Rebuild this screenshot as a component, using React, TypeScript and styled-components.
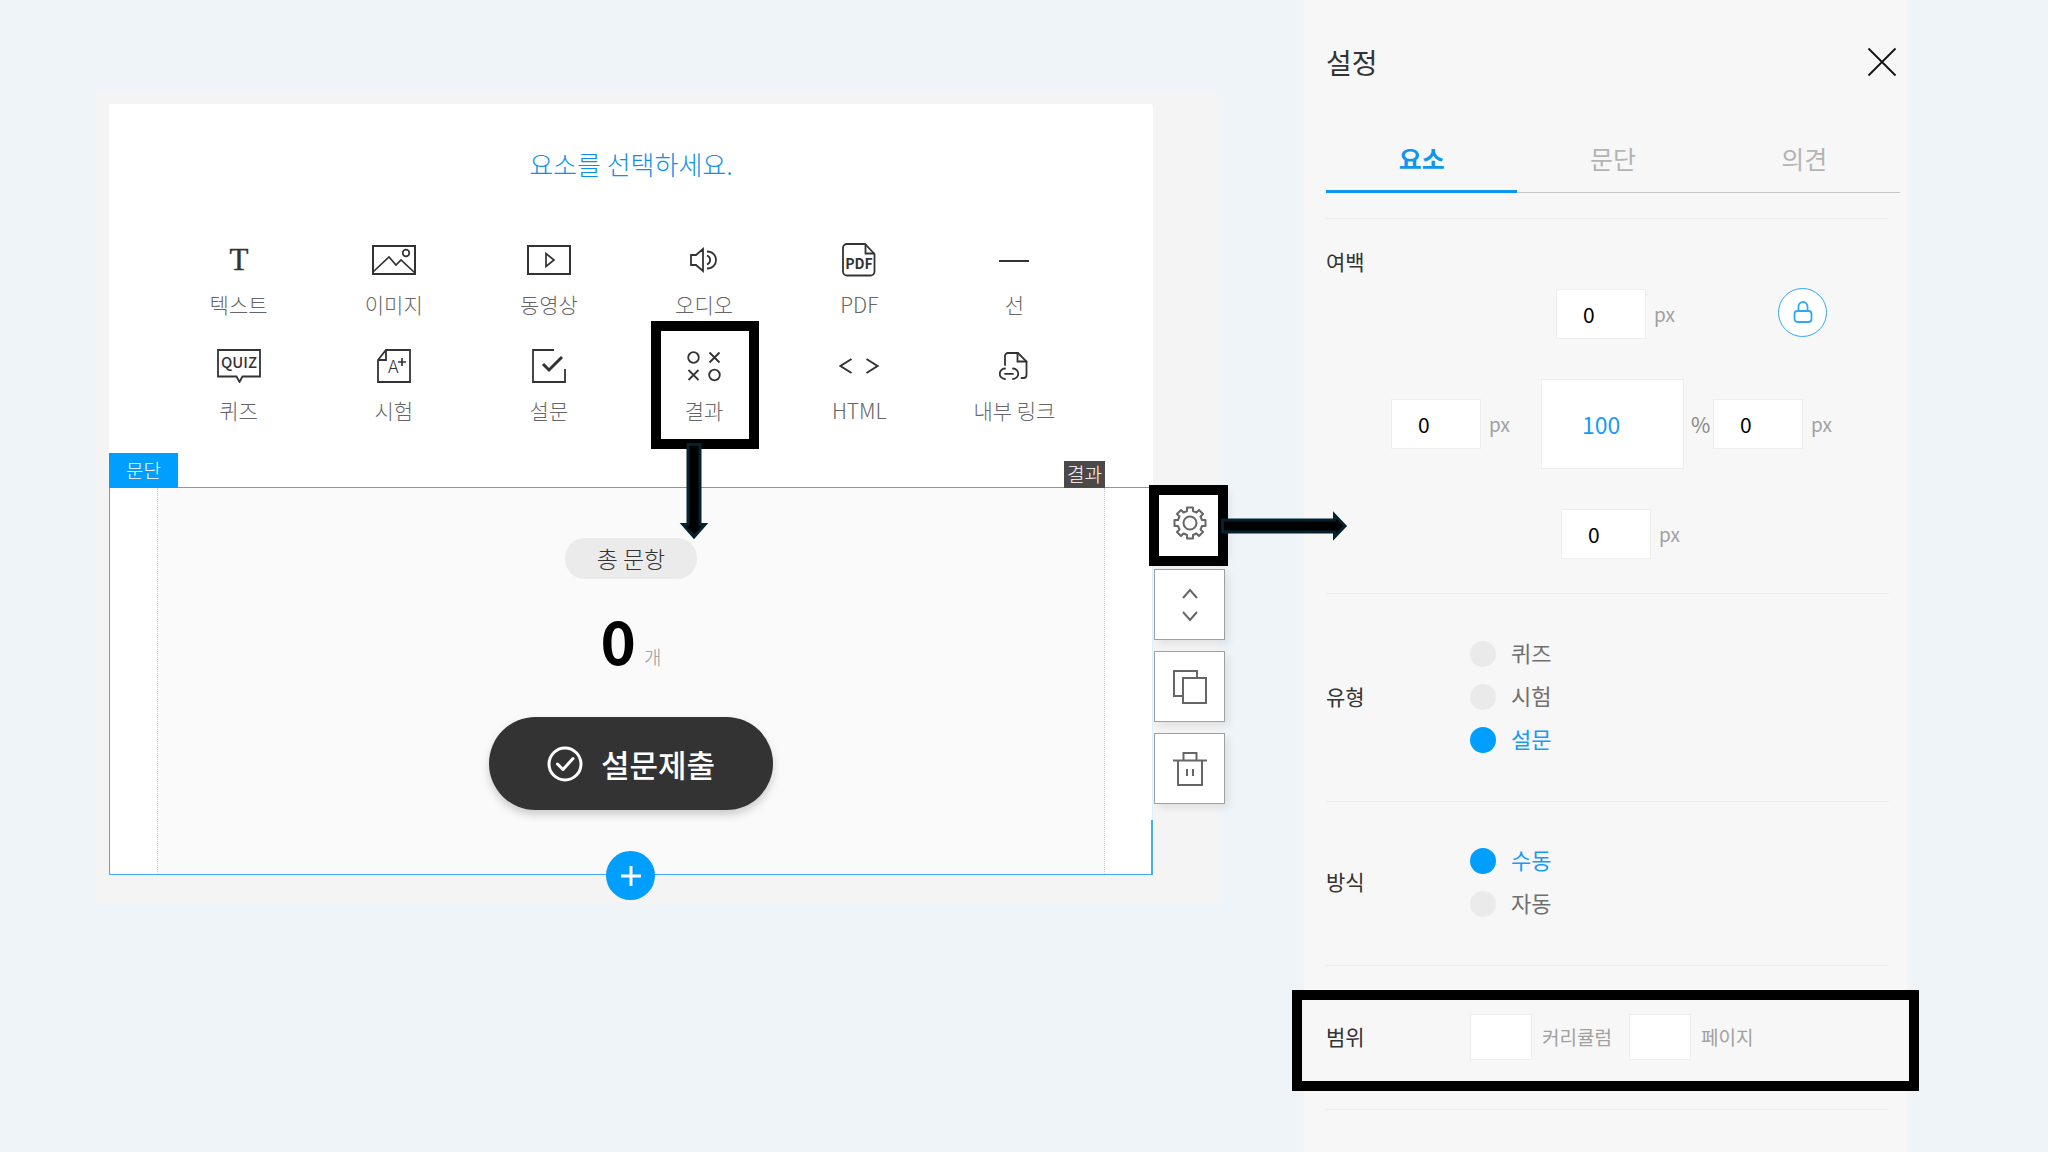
import React, { useState } from 'react';
import styled, { createGlobalStyle, css } from 'styled-components';

const blue = '#009eff';
const ink = '#333';

const GlobalStyle = createGlobalStyle`
  *, *::before, *::after { box-sizing: border-box; }
  body {
    margin: 0;
    background: #eff4f8;
    color: ${ink};
    font-family: "Noto Sans CJK KR", "Noto Sans", sans-serif;
    font-size: 21px;
    line-height: 30px;
  }
  button, input { font: inherit; color: inherit; margin: 0; }
  button { padding: 0; border: 0; background: none; cursor: pointer; }
  h1, h2, p, fieldset { margin: 0; padding: 0; border: 0; font-weight: 400; }
  svg { display: block; flex-shrink: 0; }
`;

const Page = styled.div`
  display: flex;
  align-items: flex-start;
  gap: 87px;
  min-height: 100vh;
  padding: 0 141px 0 96px;
`;

/* ---------- Editor ---------- */

const Workspace = styled.main`
  flex: 1;
  min-width: 0;
  display: grid;
  grid-template-columns: minmax(0, 1fr) 64px;
  margin-top: 92px;
  padding: 12px 0 28px 13px;
  background: #f4f4f4;
  box-shadow: 0 0 6px #f4f4f4;
`;

const Picker = styled.section`
  grid-column: 1;
  padding: 43px 61px 62px 52px;
  background: #fff;
  border-top-right-radius: 3px;
`;

const PickerTitle = styled.h1`
  padding-left: 9px;
  margin-bottom: 59px;
  font-size: 26px;
  font-weight: 300;
  line-height: 34px;
  text-align: center;
  color: #0c90ee;
`;

const ToolGrid = styled.div`
  display: grid;
  grid-template-columns: repeat(6, 1fr);
  row-gap: 27px;
`;

const ToolCell = styled.div`
  position: relative;
  display: flex;
  justify-content: center;
`;

const Tool = styled.button`
  display: flex;
  flex-direction: column;
  align-items: center;
  gap: 9px;
  font-weight: 300;
  color: #666;
`;

const ToolIcon = styled.span`
  display: flex;
  align-items: center;
  height: 40px;
`;

const Block = styled.section`
  grid-column: 1;
  position: relative;
  padding: 0 47px;
  border: 1px solid #43abee;
  border-right-color: #dcf0fb;
  background: #fff;

  &::after {
    content: '';
    position: absolute;
    right: -1px;
    bottom: -1px;
    width: 2px;
    height: 55px;
    background: #43abee;
  }
`;

const BlockTab = styled.span`
  position: absolute;
  left: -1px;
  bottom: 100%;
  padding: 0 17px 2px;
  background: ${blue};
  color: #fff;
  font-size: 19px;
  font-weight: 300;
  line-height: 33px;
`;

const BlockBadge = styled.span`
  position: absolute;
  right: 47px;
  bottom: 100%;
  padding: 0 3px 1px;
  background: #4d4948;
  color: #fff;
  font-size: 19px;
  font-weight: 300;
  line-height: 26px;
`;

const Result = styled.div`
  display: flex;
  flex-direction: column;
  align-items: center;
  padding: 50px 0 64px;
  border: 1px dotted #ccc;
  border-width: 0 1px;
  background: #fafafa;
`;

const Pill = styled.p`
  padding: 0 32px;
  border-radius: 20px;
  background: #ebebeb;
  font-size: 23px;
  font-weight: 300;
  line-height: 41px;
`;

const Count = styled.p`
  display: flex;
  align-items: baseline;
  gap: 8px;
  height: 60px;
  margin: 30px 0 48px;
  line-height: 60px;
`;

const CountValue = styled.strong`
  font-size: 60px;
  font-weight: 700;
  color: #000;
`;

const CountUnit = styled.span`
  font-size: 19px;
  font-weight: 300;
  color: #999;
`;

const Submit = styled.button`
  display: flex;
  align-items: center;
  gap: 18px;
  height: 93px;
  padding: 0 58px;
  border-radius: 47px;
  background: #333;
  box-shadow: 0 5px 8px rgba(0, 0, 0, 0.18);
  color: #fff;
  font-size: 31px;
  font-weight: 500;
  white-space: nowrap;
`;

const AddButton = styled.button`
  position: absolute;
  left: 50%;
  bottom: -26px;
  z-index: 1;
  display: flex;
  align-items: center;
  justify-content: center;
  width: 49px;
  height: 49px;
  margin-left: -25px;
  border-radius: 50%;
  background: ${blue};
  color: #fff;
`;

const Rail = styled.div`
  grid-column: 2;
  display: flex;
  flex-direction: column;
  gap: 11px;
  width: 71px;
  margin-left: 1px;
`;

const RailItem = styled.div`
  position: relative;
`;

const RailButton = styled.button`
  display: flex;
  align-items: center;
  justify-content: center;
  width: 71px;
  height: 71px;
  border: 1px solid #a0a0a0;
  background: #fff;
  box-shadow: 4px 4px 8px rgba(0, 0, 0, 0.08);
  color: #666;
`;

/* ---------- Guide marks ---------- */

const Frame = styled.span<{ $inset: string }>`
  position: absolute;
  inset: ${(p) => p.$inset};
  z-index: 2;
  border: 10px solid #000;
  pointer-events: none;
`;

const ArrowDown = styled.svg`
  position: absolute;
  top: 97px;
  left: 50%;
  z-index: 3;
  margin-left: -25px;
`;

const ArrowRight = styled.svg`
  position: absolute;
  top: 24px;
  left: 67px;
  z-index: 3;
`;

/* ---------- Settings ---------- */

const Settings = styled.aside`
  flex: 0 0 603px;
  min-height: 100vh;
  padding: 40px 7px 0 22px;
  background: #f7f7f7;
  box-shadow: 0 0 4px #f7f7f7;
`;

const SettingsHeader = styled.header`
  display: flex;
  align-items: center;
  justify-content: space-between;
  height: 44px;
  padding-right: 3px;
`;

const SettingsTitle = styled.h2`
  font-size: 28px;
  line-height: 44px;
`;

const Tabs = styled.div`
  display: grid;
  grid-template-columns: repeat(3, 1fr);
  margin: 44px 0 25px;
`;

const Tab = styled.button<{ $active: boolean }>`
  height: 65px;
  padding-bottom: 4px;
  border-bottom: 1px solid #c6c6c6;
  font-size: 25px;
  color: #b4b4b4;
  ${(p) =>
    p.$active &&
    css`
      padding-bottom: 2px;
      border-bottom: 3px solid #0f97ee;
      color: #0f97ee;
      font-weight: 700;
    `}
`;

const Group = styled.section<{ $pad: string }>`
  position: relative;
  margin-right: 11px;
  padding: ${(p) => p.$pad};
  border-top: 1px solid #ececec;
`;

const Row = styled.fieldset`
  display: grid;
  grid-template-columns: 144px 1fr;
  align-items: center;
`;

const RowLabel = styled.span`
  padding-bottom: 2px;
`;

const MarginGrid = styled.div`
  display: grid;
  grid-template-columns: 150px 172px 1fr;
  grid-template-rows: 50px 90px 50px;
  row-gap: 40px;
  align-items: center;
  margin: 13px 0 0 65px;
`;

const Field = styled.label<{ $col?: number; $indent?: number; $gap?: number }>`
  display: flex;
  align-items: center;
  gap: ${(p) => p.$gap ?? 8}px;
  ${(p) => p.$col && `grid-column: ${p.$col};`}
  margin-left: ${(p) => p.$indent ?? 0}px;
`;

const NumberBox = styled.input<{ $size?: 'large' | 'small' }>`
  width: 90px;
  height: 50px;
  padding: 0 0 0 26px;
  border: 1px solid #eee;
  border-radius: 0;
  outline: 0;
  background: #fff;
  color: #000;
  ${(p) =>
    p.$size === 'large' &&
    css`
      width: 143px;
      height: 90px;
      padding-left: 40px;
      color: #159cf3;
      font-size: 23px;
    `}
  ${(p) =>
    p.$size === 'small' &&
    css`
      width: 62px;
      height: 46px;
      padding: 0 8px;
    `}
`;

const Unit = styled.span<{ $large?: boolean }>`
  font-size: ${(p) => (p.$large ? 21 : 19)}px;
  color: ${(p) => (p.$large ? '#888' : '#a0a0a0')};
`;

const LockButton = styled.button`
  display: flex;
  align-items: center;
  justify-content: center;
  justify-self: start;
  width: 49px;
  height: 49px;
  margin: 0 0 4px 65px;
  border: 1px solid #2fa8f3;
  border-radius: 50%;
  background: #fff;
  color: #2fa8f3;
`;

const Choice = styled.label<{ $on: boolean }>`
  display: flex;
  align-items: center;
  gap: 15px;
  height: 43px;
  font-size: 22px;
  color: ${(p) => (p.$on ? '#159cf3' : '#707070')};
`;

const ChoiceText = styled.span`
  padding-bottom: 4px;
`;

const Radio = styled.input`
  appearance: none;
  width: 26px;
  height: 26px;
  border-radius: 50%;
  background: #eaeaea;
  &:checked { background: ${blue}; }
`;

const RangeFields = styled.div`
  display: flex;
  gap: 17px;
`;

/* ---------- Icons ---------- */

const glyph = {
  fill: 'none',
  stroke: ink,
  strokeWidth: 2,
} as const;

const icons: Record<string, React.ReactNode> = {
  텍스트: (
    <svg width="30" height="34" viewBox="0 0 30 34">
      <text x="15" y="27" textAnchor="middle" fontFamily="Liberation Serif, serif" fontSize="31" fill={ink} stroke={ink} strokeWidth="0.4">T</text>
    </svg>
  ),
  이미지: (
    <svg width="44" height="30" viewBox="0 0 44 30" {...glyph}>
      <rect x="1" y="1" width="42" height="28" />
      <path d="M1 27 L17 12 L24 20 L29 15 L43 28" strokeWidth="1.7" />
      <circle cx="34" cy="8" r="3.3" strokeWidth="1.7" />
    </svg>
  ),
  동영상: (
    <svg width="44" height="30" viewBox="0 0 44 30" {...glyph}>
      <rect x="1" y="1" width="42" height="28" />
      <path d="M19 8.5 V21.5 L27 15 Z" strokeWidth="1.7" />
    </svg>
  ),
  오디오: (
    <svg width="30" height="28" viewBox="0 0 30 28" {...glyph} strokeWidth={1.8}>
      <path d="M2 9 V19 H7 L14 25 V3 L7 9 Z" />
      <path d="M18 9.5 A4.8 4.8 0 0 1 18 18.5" />
      <path d="M18 5.5 C30 5.5 30 22.5 18 22.5" />
    </svg>
  ),
  PDF: (
    <svg width="34" height="34" viewBox="0 0 34 34" {...glyph}>
      <path d="M5 1 H23 L32.5 11 V28.5 A4 4 0 0 1 28.5 32.5 H5 A4 4 0 0 1 1 28.5 V5 A4 4 0 0 1 5 1 Z" strokeWidth="1.8" />
      <path d="M23.5 1 V10.5 H32.5" strokeWidth="1.8" />
      <text x="17" y="26" textAnchor="middle" fontSize="14" fontWeight="700" fill={ink} stroke="none">PDF</text>
    </svg>
  ),
  선: (
    <svg width="30" height="34" viewBox="0 0 30 34" {...glyph}>
      <path d="M0 18 H30" />
    </svg>
  ),
  퀴즈: (
    <svg width="44" height="34" viewBox="0 0 44 34" {...glyph}>
      <path d="M1 1 H43 V27.5 H25.5 L22.5 33 L19.5 27.5 H1 Z" strokeWidth="1.8" />
      <text x="22" y="19" textAnchor="middle" fontSize="15" fontWeight="500" fill={ink} stroke="none">QUIZ</text>
    </svg>
  ),
  시험: (
    <svg width="34" height="34" viewBox="0 0 34 34" {...glyph}>
      <path d="M9 1 H33 V33 H1 V11 Z M9 1 V11 H1" strokeWidth="1.8" />
      <text x="11" y="24" fontSize="18" fill={ink} stroke="none">A</text>
      <path d="M21 13 H29 M25 9 V17" strokeWidth="1.7" />
    </svg>
  ),
  설문: (
    <svg width="34" height="34" viewBox="0 0 34 34" {...glyph}>
      <path d="M22 1 H1 V33 H33 V20" strokeWidth="1.8" />
      <path d="M11 15 L17 21 L30 8" strokeWidth="3" />
    </svg>
  ),
  결과: (
    <svg width="34" height="34" viewBox="0 0 34 34" {...glyph}>
      <circle cx="6.5" cy="8.5" r="5.3" strokeWidth="1.8" />
      <circle cx="27.5" cy="26" r="5.3" strokeWidth="1.8" />
      <path d="M22.5 3.5 L32.5 13.5 M32.5 3.5 L22.5 13.5 M1.5 21 L11.5 31 M11.5 21 L1.5 31" strokeWidth="1.8" />
    </svg>
  ),
  HTML: (
    <svg width="40" height="20" viewBox="0 0 40 20" {...glyph}>
      <path d="M12.5 3 L1.5 10 L12.5 17 M27.5 3 L38.5 10 L27.5 17" />
    </svg>
  ),
  '내부 링크': (
    <svg width="30" height="30" viewBox="0 0 30 30" {...glyph} strokeWidth={1.8} strokeLinecap="round">
      <path d="M6 14 V5 A3 3 0 0 1 9 2 H19 L27.5 10.5 V24 A3 3 0 0 1 24.5 27 H22.5" />
      <path d="M18.5 2 V10.5 H27.5" />
      <path d="M6 17.5 A5 5 0 0 0 6 28 M14 17.5 A5 5 0 0 1 14 28 M6 22.8 H14" />
    </svg>
  ),
};

const GearIcon = () => (
  <svg width="36" height="36" viewBox="0 0 36 36" fill="none" stroke="currentColor" strokeWidth="2" strokeLinejoin="round">
    <path d="M15 2.5 H21 V6 L24.5 7.5 L27 5 L31 9 L28.5 11.5 L30 15 H33.5 V21 H30 L28.5 24.5 L31 27 L27 31 L24.5 28.5 L21 30 V33.5 H15 V30 L11.5 28.5 L9 31 L5 27 L7.5 24.5 L6 21 H2.5 V15 H6 L7.5 11.5 L5 9 L9 5 L11.5 7.5 L15 6 Z" />
    <circle cx="18" cy="18" r="6.5" />
  </svg>
);

const MoveIcon = () => (
  <svg width="18" height="36" viewBox="0 0 18 36" fill="none" stroke="currentColor" strokeWidth="2">
    <path d="M2 11 L9 3 L16 11 M2 25 L9 33 L16 25" />
  </svg>
);

const CopyIcon = () => (
  <svg width="34" height="34" viewBox="0 0 34 34" fill="none" stroke="currentColor" strokeWidth="2">
    <path d="M10 26 H1 V1 H24 V8" />
    <rect x="10" y="8" width="23" height="25" />
  </svg>
);

const TrashIcon = () => (
  <svg width="34" height="34" viewBox="0 0 34 34" fill="none" stroke="currentColor" strokeWidth="2">
    <path d="M0 8.5 H34 M5 8.5 V33 H29 V8.5 M10.5 8.5 V1 H23.5 V8.5 M14 17 V24 M20 17 V24" />
  </svg>
);

const CheckCircle = () => (
  <svg width="36" height="36" viewBox="0 0 36 36" fill="none" stroke="#fff" strokeWidth="3">
    <circle cx="18" cy="18" r="16" />
    <path d="M10.5 18 L16 23.5 L26 12.5" strokeLinecap="round" strokeLinejoin="round" />
  </svg>
);

const PlusIcon = () => (
  <svg width="20" height="20" viewBox="0 0 20 20" fill="none" stroke="currentColor" strokeWidth="3">
    <path d="M0 10 H20 M10 0 V20" />
  </svg>
);

const LockIcon = () => (
  <svg width="20" height="22" viewBox="0 0 20 22" fill="none" stroke="currentColor" strokeWidth="1.8">
    <rect x="1.5" y="10" width="17" height="11" rx="3" />
    <path d="M5.5 10 V5.5 A4.5 4.5 0 0 1 14.5 5.5 V10" />
  </svg>
);

const CloseIcon = () => (
  <svg width="30" height="30" viewBox="0 0 30 30" fill="none" stroke="#111" strokeWidth="1.8">
    <path d="M1.5 1.5 L28.5 28.5 M28.5 1.5 L1.5 28.5" />
  </svg>
);

/* ---------- Page ---------- */

const tools = ['텍스트', '이미지', '동영상', '오디오', 'PDF', '선', '퀴즈', '시험', '설문', '결과', 'HTML', '내부 링크'];
const tabs = ['요소', '문단', '의견'];

function Choices({ title, name, options, initial }: { title: string; name: string; options: string[]; initial: string }) {
  const [value, setValue] = useState(initial);
  return (
    <Row role="radiogroup" aria-label={title}>
      <RowLabel>{title}</RowLabel>
      <div>
        {options.map((option) => (
          <Choice key={option} $on={option === value}>
            <Radio type="radio" name={name} checked={option === value} onChange={() => setValue(option)} />
            <ChoiceText>{option}</ChoiceText>
          </Choice>
        ))}
      </div>
    </Row>
  );
}

export default function App() {
  const [tab, setTab] = useState('요소');

  return (
    <>
      <GlobalStyle />
      <Page>
        <Workspace>
          <Picker>
            <PickerTitle>요소를 선택하세요.</PickerTitle>
            <ToolGrid>
              {tools.map((name) => (
                <ToolCell key={name}>
                  <Tool type="button">
                    <ToolIcon>{icons[name]}</ToolIcon>
                    {name}
                  </Tool>
                  {name === '결과' && (
                    <>
                      <Frame $inset="-25px 23px -24px 24px" />
                      <ArrowDown width="30" height="97" viewBox="0 0 30 97" fill="#000" stroke="#04222f" strokeWidth="3">
                        <path d="M9 1.5 H21 V81.5 H26 L15 94 L4 81.5 H9 Z" />
                      </ArrowDown>
                    </>
                  )}
                </ToolCell>
              ))}
            </ToolGrid>
          </Picker>

          <Block>
            <BlockTab>문단</BlockTab>
            <BlockBadge>결과</BlockBadge>
            <Result>
              <Pill>총 문항</Pill>
              <Count>
                <CountValue>0</CountValue>
                <CountUnit>개</CountUnit>
              </Count>
              <Submit type="button">
                <CheckCircle />
                설문제출
              </Submit>
            </Result>
            <AddButton type="button" aria-label="추가">
              <PlusIcon />
            </AddButton>
          </Block>

          <Rail>
            <RailItem>
              <RailButton type="button" aria-label="설정">
                <GearIcon />
              </RailButton>
              <Frame $inset="-2px -3px -8px -5px" />
              <ArrowRight width="127" height="30" viewBox="0 0 127 30" fill="#000" stroke="#04222f" strokeWidth="3">
                <path d="M1.5 9 H113.5 V4 L124 15 L113.5 26 V21 H1.5 Z" />
              </ArrowRight>
            </RailItem>
            <RailButton type="button" aria-label="이동">
              <MoveIcon />
            </RailButton>
            <RailButton type="button" aria-label="복사">
              <CopyIcon />
            </RailButton>
            <RailButton type="button" aria-label="삭제">
              <TrashIcon />
            </RailButton>
          </Rail>
        </Workspace>

        <Settings>
          <SettingsHeader>
            <SettingsTitle>설정</SettingsTitle>
            <button type="button" aria-label="닫기">
              <CloseIcon />
            </button>
          </SettingsHeader>

          <Tabs role="tablist">
            {tabs.map((name) => (
              <Tab key={name} type="button" role="tab" aria-selected={tab === name} $active={tab === name} onClick={() => setTab(name)}>
                {name}
              </Tab>
            ))}
          </Tabs>

          <Group $pad="27px 0 34px">
            <span>여백</span>
            <MarginGrid>
              <Field $col={2} $indent={15}>
                <NumberBox defaultValue="0" />
                <Unit>px</Unit>
              </Field>
              <LockButton type="button" aria-label="잠금">
                <LockIcon />
              </LockButton>
              <Field $col={1}>
                <NumberBox defaultValue="0" />
                <Unit>px</Unit>
              </Field>
              <Field $col={2} $gap={7}>
                <NumberBox $size="large" defaultValue="100" />
                <Unit $large>%</Unit>
              </Field>
              <Field $col={3}>
                <NumberBox defaultValue="0" />
                <Unit>px</Unit>
              </Field>
              <Field $col={2} $indent={20}>
                <NumberBox defaultValue="0" />
                <Unit>px</Unit>
              </Field>
            </MarginGrid>
          </Group>

          <Group $pad="38px 0 40px">
            <Choices title="유형" name="kind" options={['퀴즈', '시험', '설문']} initial="설문" />
          </Group>

          <Group $pad="37px 0 40px">
            <Choices title="방식" name="mode" options={['수동', '자동']} initial="수동" />
          </Group>

          <Group $pad="48px 0 49px">
            <Row>
              <RowLabel>범위</RowLabel>
              <RangeFields>
                <Field $gap={10}>
                  <NumberBox $size="small" />
                  <Unit>커리큘럼</Unit>
                </Field>
                <Field $gap={10}>
                  <NumberBox $size="small" />
                  <Unit>페이지</Unit>
                </Field>
              </RangeFields>
            </Row>
            <Frame $inset="24px -30px 18px -34px" />
          </Group>
          <Group $pad="0" />
        </Settings>
      </Page>
    </>
  );
}
